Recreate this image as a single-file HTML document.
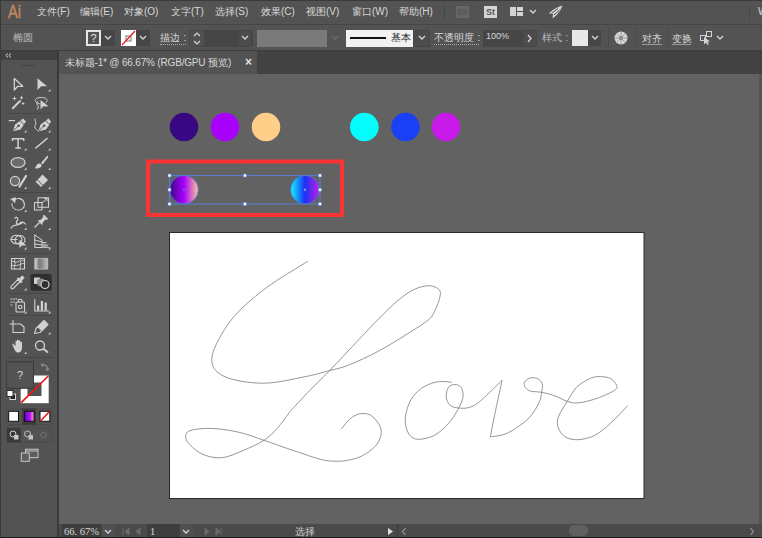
<!DOCTYPE html>
<html><head><meta charset="utf-8">
<style>
*{margin:0;padding:0;box-sizing:border-box}
html,body{width:762px;height:538px;overflow:hidden;background:#535353;font-family:"Liberation Sans",sans-serif;color:#d4d4d4}
.a{position:absolute}
.c{display:inline-block;width:1em;text-align:center}
.t{position:absolute;font-size:10px;line-height:12px;white-space:nowrap;color:#d8d8d8}
</style></head><body>
<!-- window border -->
<div class="a" style="left:0;top:0;width:762px;height:538px;background:#535353"></div>
<div class="a" style="left:0;top:0;width:762px;height:1px;background:#3a3a3a"></div>
<div class="a" style="left:0;top:0;width:1px;height:538px;background:#3a3a3a"></div>
<!-- menu bar -->
<div class="a" style="left:1px;top:24px;width:761px;height:1px;background:#454545"></div>
<div class="t" style="left:8px;top:2px;font-size:17.5px;line-height:20px;color:#c98a5a;transform:scaleX(0.84);transform-origin:0 0;-webkit-text-stroke:0.35px #c98a5a">Ai</div>
<div class="t" style="left:37px;top:6px"><span class="c">文</span><span class="c">件</span>(F)</div>
<div class="t" style="left:80px;top:6px"><span class="c">编</span><span class="c">辑</span>(E)</div>
<div class="t" style="left:124px;top:6px"><span class="c">对</span><span class="c">象</span>(O)</div>
<div class="t" style="left:171px;top:6px"><span class="c">文</span><span class="c">字</span>(T)</div>
<div class="t" style="left:215px;top:6px"><span class="c">选</span><span class="c">择</span>(S)</div>
<div class="t" style="left:261px;top:6px"><span class="c">效</span><span class="c">果</span>(C)</div>
<div class="t" style="left:306px;top:6px"><span class="c">视</span><span class="c">图</span>(V)</div>
<div class="t" style="left:352px;top:6px"><span class="c">窗</span><span class="c">口</span>(W)</div>
<div class="t" style="left:399px;top:6px"><span class="c">帮</span><span class="c">助</span>(H)</div>
<div class="a" style="left:444px;top:5px;width:1px;height:15px;background:#484848"></div>
<div class="a" style="left:456px;top:6px;width:13px;height:12px;background:#666666;color:#555555;font-size:9px;font-weight:bold;line-height:12px;text-align:center">Br</div>
<div class="a" style="left:484px;top:6px;width:13px;height:12px;background:#d4d4d4;color:#555555;font-size:9px;font-weight:bold;line-height:12px;text-align:center">St</div>
<div class="a" style="left:510px;top:7px;width:6px;height:9px;background:#d4d4d4"></div>
<div class="a" style="left:517px;top:7px;width:6px;height:4px;background:#d4d4d4"></div>
<div class="a" style="left:517px;top:12px;width:6px;height:4px;background:#d4d4d4"></div>
<svg class="a" style="left:529px;top:9px" width="8" height="6"><path d="M1,1 L4,4 L7,1" stroke="#d8d8d8" stroke-width="1.3" fill="none"/></svg>
<svg class="a" style="left:548px;top:5px" width="15" height="14"><path d="M14.5,0.5 C9,2 3.5,5.5 1,8.5 L5,9 L4.5,13.5 C9,10.5 12.5,6 14.5,0.5 Z" fill="#d4d4d4"/><path d="M3.5,8.5 L10,3.5 M6,10 L11.5,5" stroke="#535353" stroke-width="1"/></svg>
<div class="a" style="left:749px;top:5px;width:1px;height:15px;background:#484848"></div>
<div class="t" style="left:758px;top:6px">W</div>
<!-- control bar -->
<div class="a" style="left:1px;top:25px;width:761px;height:26px;background:#535353"></div>
<div class="a" style="left:1px;top:50px;width:761px;height:1px;background:#3c3c3c"></div>
<div class="a" style="left:6px;top:29px;width:1px;height:18px;border-left:1px dotted #444"></div>
<div class="t" style="left:13px;top:32px;font-size:10px;color:#bababa"><span class="c">椭</span><span class="c">圆</span></div>
<div class="a" style="left:82px;top:28px;width:1px;height:20px;background:#4a4a4a"></div>
<!-- fill ? -->
<div class="a" style="left:86px;top:30px;width:15px;height:16px;border:2px solid #e6e6e6;background:#535353;font-size:11px;line-height:12px;text-align:center;color:#e0e0e0">?</div>
<div class="a" style="left:101px;top:30px;width:14px;height:16px;background:#464646"></div>
<svg class="a" style="left:104px;top:35px" width="8" height="6"><path d="M1,1 L4,4 L7,1" stroke="#d8d8d8" stroke-width="1.3" fill="none"/></svg>
<!-- stroke none -->
<div class="a" style="left:121px;top:30px;width:15px;height:16px;background:#ffffff"></div>
<svg class="a" style="left:121px;top:30px" width="15" height="16"><rect x="5" y="6" width="5" height="5" fill="none" stroke="#666" stroke-width="0.9"/><path d="M1,15 L14,1" stroke="#ee1c1c" stroke-width="1.3"/></svg>
<div class="a" style="left:136px;top:30px;width:14px;height:16px;background:#464646"></div>
<svg class="a" style="left:139px;top:35px" width="8" height="6"><path d="M1,1 L4,4 L7,1" stroke="#d8d8d8" stroke-width="1.3" fill="none"/></svg>
<div class="t" style="left:160px;top:32px;font-size:10px"><span class="c">描</span><span class="c">边</span><span class="c">:</span></div>
<div class="a" style="left:160px;top:44px;width:26px;height:1px;border-top:1px dotted #aaa"></div>
<div class="a" style="left:189px;top:30px;width:64px;height:17px;border:1px solid #474747;border-radius:2px"></div>
<div class="a" style="left:190px;top:31px;width:14px;height:15px;background:#505050"></div>
<svg class="a" style="left:193px;top:31px" width="8" height="15"><path d="M1,5 L4,2 L7,5 M1,10 L4,13 L7,10" stroke="#d8d8d8" stroke-width="1.2" fill="none"/></svg>
<div class="a" style="left:204px;top:30px;width:34px;height:17px;background:#464646"></div>
<div class="a" style="left:238px;top:30px;width:14px;height:17px;background:#4c4c4c;border:1px solid #464646"></div>
<svg class="a" style="left:241px;top:35px" width="8" height="6"><path d="M1,1 L4,4 L7,1" stroke="#d8d8d8" stroke-width="1.3" fill="none"/></svg>
<div class="a" style="left:257px;top:30px;width:70px;height:17px;background:#7a7a7a"></div>
<svg class="a" style="left:331px;top:35px" width="8" height="6"><path d="M1,1 L4,4 L7,1" stroke="#6c6c6c" stroke-width="1.3" fill="none"/></svg>
<div class="a" style="left:346px;top:30px;width:67px;height:17px;background:#f2f2f2"></div>
<div class="a" style="left:350px;top:37px;width:36px;height:2px;background:#111"></div>
<div class="t" style="left:391px;top:32px;font-size:10px;line-height:12px;color:#222"><span class="c">基</span><span class="c">本</span></div>
<div class="a" style="left:413px;top:30px;width:17px;height:17px;background:#4c4c4c;border:1px solid #464646"></div>
<svg class="a" style="left:418px;top:35px" width="8" height="6"><path d="M1,1 L4,4 L7,1" stroke="#d8d8d8" stroke-width="1.3" fill="none"/></svg>
<div class="t" style="left:434px;top:32px;font-size:10px"><span class="c">不</span><span class="c">透</span><span class="c">明</span><span class="c">度</span><span class="c">:</span></div>
<div class="a" style="left:434px;top:44px;width:45px;height:1px;border-top:1px dotted #aaa"></div>
<div class="a" style="left:483px;top:30px;width:39px;height:17px;background:#464646"></div>
<div class="t" style="left:486px;top:31px;font-size:9px;line-height:11px">100%</div>
<div class="a" style="left:522px;top:30px;width:15px;height:17px;background:#4c4c4c;border:1px solid #464646"></div>
<svg class="a" style="left:527px;top:34px" width="6" height="9"><path d="M1,1 L4,4.5 L1,8" stroke="#d8d8d8" stroke-width="1.3" fill="none"/></svg>
<div class="t" style="left:542px;top:32px;font-size:10px;color:#bdbdbd"><span class="c">样</span><span class="c">式</span><span class="c">:</span></div>
<div class="a" style="left:572px;top:30px;width:16px;height:16px;background:#e8e8e8"></div>
<div class="a" style="left:588px;top:30px;width:13px;height:16px;background:#464646"></div>
<svg class="a" style="left:591px;top:35px" width="8" height="6"><path d="M1,1 L4,4 L7,1" stroke="#d8d8d8" stroke-width="1.3" fill="none"/></svg>
<div class="a" style="left:608px;top:28px;width:1px;height:20px;background:#4a4a4a"></div>
<svg class="a" style="left:614px;top:31px" width="14" height="14"><circle cx="7" cy="7" r="6.5" fill="#d8d8d8"/><circle cx="7" cy="7" r="2" fill="#8a8a8a"/><path d="M7,1 V13 M1,7 H13 M2.8,2.8 L11.2,11.2 M11.2,2.8 L2.8,11.2" stroke="#8a8a8a" stroke-width="0.8"/></svg>
<div class="a" style="left:636px;top:28px;width:1px;height:20px;background:#4a4a4a"></div>
<div class="t" style="left:642px;top:33px;font-size:10px"><span class="c">对</span><span class="c">齐</span></div>
<div class="a" style="left:642px;top:44px;width:20px;height:1px;background:#9a9a9a"></div>
<div class="a" style="left:667px;top:28px;width:1px;height:20px;background:#4a4a4a"></div>
<div class="t" style="left:672px;top:33px;font-size:10px"><span class="c">变</span><span class="c">换</span></div>
<div class="a" style="left:672px;top:44px;width:19px;height:1px;background:#9a9a9a"></div>
<svg class="a" style="left:699px;top:30px" width="15" height="15"><rect x="1.5" y="5.5" width="5" height="5" fill="none" stroke="#d4d4d4"/><rect x="7.5" y="1.5" width="5" height="5" fill="none" stroke="#d4d4d4"/><path d="M5,7 L5,14.5 L7,12.5 L8.5,15 L9.8,14.3 L8.5,11.8 L11,11.5 Z" fill="#d4d4d4"/></svg>
<svg class="a" style="left:716px;top:35px" width="8" height="6"><path d="M1,1 L4,4 L7,1" stroke="#d8d8d8" stroke-width="1.3" fill="none"/></svg>

<!-- tab bar -->
<div class="a" style="left:59px;top:51px;width:703px;height:23px;background:#424242"></div>
<div class="a" style="left:59px;top:51px;width:198px;height:23px;background:#535353"></div>
<div class="t" style="left:64.5px;top:57px;font-size:10px;letter-spacing:-0.18px"><span class="c">未</span><span class="c">标</span><span class="c">题</span>-1* @ 66.67% (RGB/GPU <span class="c">预</span><span class="c">览</span>)</div>
<div class="t" style="left:245px;top:56px;font-size:12px;font-weight:bold;color:#e0e0e0">×</div>

<!-- tools panel -->
<div class="a" style="left:1px;top:51px;width:57px;height:473px;background:#535353"></div>
<div class="a" style="left:1px;top:51px;width:57px;height:9px;background:#424242"></div>
<svg class="a" style="left:5px;top:53px" width="7" height="5"><path d="M3,0.5 L0.8,2.5 L3,4.5 M6,0.5 L3.8,2.5 L6,4.5" stroke="#cfcfcf" stroke-width="1" fill="none"/></svg>
<svg class="a" style="left:20px;top:64px" width="17" height="3"><path d="M1,1.5 H16" stroke="#404040" stroke-width="1.5" stroke-dasharray="1.2 1.2"/></svg>
<div class="a" style="left:57px;top:51px;width:2px;height:487px;background:#3a3a3a"></div>

<svg class="a" style="left:0;top:0" width="60" height="538">
<g stroke="#474747" stroke-width="1"><path d="M6.5,113.5 H52.5 M6.5,192.5 H52.5 M6.5,253.5 H52.5 M6.5,293.5 H52.5 M6.5,315.5 H52.5 M6.5,357.5 H52.5"/></g>
<g fill="#cdcdcd">
<path d="M26.5,130 V132.5 H24 Z M50.5,130 V132.5 H48 Z M26.5,148 V150.5 H24 Z M50.5,148 V150.5 H48 Z M26.5,167.5 V170 H24 Z M50.5,167.5 V170 H48 Z M26.5,186.5 V189 H24 Z M50.5,186.5 V189 H48 Z M26.5,209.5 V212 H24 Z M50.5,209.5 V212 H48 Z M26.5,227.5 V230 H24 Z M50.5,227.5 V230 H48 Z M26.5,247 V249.5 H24 Z M50.5,247 V249.5 H48 Z M26.5,288 V290.5 H24 Z M26.5,311 V313.5 H24 Z M50.5,311 V313.5 H48 Z M50.5,332 V334.5 H48 Z M26.5,351.5 V354 H24 Z M50.5,89 V91.5 H48 Z"/>
</g>
<g fill="none" stroke="#d2d2d2" stroke-width="1.3" stroke-linejoin="round" stroke-linecap="round">
<!-- direct selection hollow -->
<path d="M14.3,78.5 V90 L17.8,86.3 L22.8,86.3 Z"/>
<!-- magic wand -->
<path d="M12.8,108.2 L20,101" stroke-width="2"/>
<path d="M14.5,97 V100 M13,98.5 H16 M21.5,96.5 V99 M20.3,97.8 H22.7 M23,102.5 V104.5 M22,103.5 H24" stroke-width="0.9"/>
<!-- lasso -->
<path d="M40,104 C34,103 33,98 40,97.5 C46,97 49,100 46,102.5 M38,101 C36,103 37,106 39,107 C37,108 36,109 38,109" stroke-width="1"/>
<!-- T -->
<path d="M12.5,141 V138.8 H23.7 V141 M18.1,138.8 V148 M15.3,148 H20.9" stroke-width="1.5" stroke-linecap="butt"/>
<!-- line -->
<path d="M35.8,148 L47,138.5" stroke-width="1.6"/>
<!-- ellipse -->
<ellipse cx="18" cy="162.5" rx="7" ry="4.9" fill="#6c6c6c" stroke-width="1.2"/>
<!-- shaper -->
<circle cx="15" cy="181" r="4.6" fill="#6c6c6c" stroke-width="1.2"/>
<path d="M19.5,186.5 L26,176" stroke-width="2.2"/>
<!-- rotate -->
<path d="M14.5,200 C17.5,197.5 22.5,198 24,202.5 C24.8,205 24,207.5 22.5,208.5" stroke-width="1.2"/><path d="M21.5,209.3 C19,210.5 15.5,210.2 13.5,208 C12.3,206.5 11.8,205 12,203.5" stroke-width="1.1" stroke-dasharray="1.3 1.3"/><path d="M11,199 L15.5,197.5 L15,202.5 Z" fill="#d2d2d2" stroke-width="0.6"/>
<!-- scale -->
<rect x="34.5" y="202.5" width="7.5" height="7.5" stroke-width="1.1"/>
<rect x="38" y="197.8" width="10.5" height="9.5" stroke-width="1.1"/>
<path d="M42,203 L47,198.5 M44.5,198.5 H47 V201" stroke-width="1"/>
<!-- warp -->
<path d="M11,228 C13,224 17,226 19,224 C21,221 24,222 25.5,224 M15,218 C17,216 19,219 17,221 C15,223 18,226 22,223" stroke-width="1.2"/>
<!-- shape builder -->
<ellipse cx="16.5" cy="239.5" rx="5.5" ry="4.2" stroke-width="1.1"/>
<ellipse cx="20" cy="240" rx="5" ry="4.5" stroke-width="1.1"/>
<path d="M11,239.5 H17" stroke-width="1"/>
<!-- perspective -->
<path d="M34.8,235 V247.5 H49 M34.8,235 L42,240 V247.5 M34.8,240 L42,242 M34.8,244 L42,245 M42,242.5 H46 M42,245 H48" stroke-width="1"/>
<!-- mesh -->
<rect x="11.5" y="258.5" width="13" height="10.5" stroke-width="1.1"/>
<path d="M11.5,261.5 C14,260.5 15,263 17.5,262 C20,261 21,259.5 21.5,258.5 M11.5,265.5 C14,265 16,266.5 18.5,265 C21,263.5 22.5,264 24.5,263 M15,258.5 C13.5,261 16,263.5 14.5,266 C13.5,267.5 14.5,268.5 15,269 M20,269 C19.5,267 21.5,265 20.5,263 C19.5,261 22,260 24.5,260.5" stroke-width="0.9"/>
<!-- eyedropper -->
<path d="M11.3,288.5 C10.5,287.5 10.8,286.5 11.5,285.8 L18,279.3 L20.2,281.5 L13.7,288 C13,288.7 12,289 11.3,288.5 Z" stroke-width="1.1"/>
<path d="M17.3,278.8 L18.3,277.8 L22.2,281.7 L21.2,282.7 Z M19.5,278.5 L21.5,276.5 C22.5,275.5 24.5,277 23.7,278.5 L21.5,280.5 Z" fill="#d2d2d2" stroke-width="0.9"/>
<!-- symbol sprayer -->
<path d="M11,299 H12 M13.5,299 H14.5 M16,299 H17 M11,302 H12 M13.5,302 H14.5 M11,305 H12" stroke-width="1.2"/>
<rect x="16" y="302" width="8.5" height="10" rx="1" stroke-width="1.1"/>
<circle cx="20.2" cy="307" r="1.8" stroke-width="1.1"/>
<path d="M18.5,302 V299.5 H22 V302" stroke-width="1"/>
<!-- graph -->
<path d="M34.8,299.5 V311 H48.5" stroke-width="1.1"/><path d="M37,305.5 h2.2 v5 h-2.2 Z M40.8,301 h2.2 v9.5 h-2.2 Z M44.6,302.5 h2.2 v8 h-2.2 Z" fill="#d2d2d2" stroke="none"/>
<path d="M38.5,131 C35,129 34,127 35.5,124.5 C37,122 34,120.5 35,119" stroke-width="1"/>
<!-- artboard -->
<path d="M13,320.5 V332.5 H24 V327 L20.5,324 H10" stroke-width="1.1"/>
<!-- pencil -->
<path d="M34.5,333.5 L36,328.5 L44,320.5 L48,324.5 L40,332.5 Z" stroke-width="1.1"/><path d="M37.5,327 L44,320.5 L48,324.5 L41.5,331 Z" fill="#d2d2d2" stroke="none"/>
<!-- zoom -->
<circle cx="40" cy="345.5" r="4.5" stroke-width="1.3"/>
<path d="M43.3,348.8 L47.5,352" stroke-width="1.8"/>
</g>
<g fill="#d2d2d2">
<!-- selection filled -->
<path d="M37.5,78.3 V90 L41.3,86.2 L47,86.2 Z"/>
<!-- lasso arrow -->
<path d="M40.5,100 V109.5 L43,106.5 L48.5,106.3 Z"/>
<!-- pens -->
<path d="M8.7,120 H15 V121.2 H8.7 Z"/>
<path d="M13,131.3 L15,124.5 L20,121 L23.8,124.8 L20.5,129.5 Z"/>
<path d="M20.5,120.5 L23,118.5 L26,121.5 L24,124 Z"/>

<path d="M38.5,131.3 L40.5,124.5 L45.5,121 L49.3,124.8 L46,129.5 Z"/>
<path d="M46,120.5 L48.5,118.5 L51,121.5 L49.5,124 Z"/>
</g><g stroke="#535353" stroke-width="0.9" fill="#535353"><path d="M13.6,130.6 L18,126.3 M39.1,130.6 L43.5,126.3"/><circle cx="18.6" cy="125.7" r="0.9"/><circle cx="44.1" cy="125.7" r="0.9"/></g><g fill="#d2d2d2">
<!-- brush -->
<path d="M41,163 L47,156 C48,155.5 48.5,156.5 48,157.5 L42.5,164.5 Z"/>
<path d="M35,168.5 C36,166 37,163.5 39.5,163.5 C41.5,164 42,165.5 41,167 C39.5,168.5 37,168.5 35,168.5 Z"/>
<!-- eraser -->
<path d="M35.5,182 L42.5,174.5 L48,180 L41,187 Z"/>
<!-- pin -->
<path d="M37.5,220.5 L40.5,220 L43.5,217 L42.5,216 L44,214.8 L48,218.8 L46.8,220.2 L45.8,219.3 L42.8,222.3 L42.3,225.3 Z"/><path d="M34.5,227.5 L39.5,222.5" stroke="#d2d2d2" stroke-width="1.3" fill="none"/>
<!-- hand -->
<path d="M13,346 C12,344 12.5,343 13.5,344 L15.5,346 V341.5 C15.5,340.5 17,340.5 17,341.5 V345 V340.5 C17,339.5 18.7,339.5 18.7,340.5 V345 V341 C18.7,340 20.3,340 20.3,341 V345.5 V342.5 C20.3,341.5 22,341.5 22,342.5 V348 C22,351 20,352.5 18,352.5 C16,352.5 15,351 13,346 Z"/>
</g>
<!-- shape builder arrow -->
<path d="M19.5,239.5 V248 L22,245.5 L26.5,245.5 Z" fill="#d2d2d2"/>
<!-- perspective fill -->
<path d="M42,242 L49,247.5 H42 Z" fill="#a0a0a0"/>
<!-- eraser stripe -->
<path d="M35.5,182 L38.5,185 L41,187 L38,184 Z" fill="#535353"/>
<path d="M37.5,180 L43,185.5" stroke="#535353" stroke-width="1"/>
<!-- gradient tool -->
<defs><linearGradient id="gt" x1="0" x2="1"><stop offset="0" stop-color="#d8d8d8"/><stop offset="0.35" stop-color="#777"/><stop offset="1" stop-color="#c0c0c0"/></linearGradient></defs>
<rect x="34.8" y="258.3" width="13" height="10.8" fill="url(#gt)" stroke="#bdbdbd" stroke-width="0.8"/>
<!-- blend highlighted -->
<rect x="30.5" y="274" width="21.2" height="16.7" rx="2" fill="#2f2f2f"/>
<rect x="34" y="277.5" width="6" height="6.5" fill="#cfcfcf"/>
<circle cx="41" cy="282.5" r="4" fill="#8a8a8a"/>
<circle cx="45" cy="284.5" r="4" fill="#2f2f2f" stroke="#d2d2d2" stroke-width="1.2"/>
</svg>
<svg class="a" style="left:0;top:0" width="60" height="538">
<!-- stroke box -->
<rect x="20.7" y="375.5" width="28" height="27.7" fill="#ffffff"/>
<rect x="27.5" y="382.5" width="14" height="13.5" fill="#535353"/>
<path d="M21.2,402.7 L48.3,376" stroke="#f21414" stroke-width="1.7"/>
<!-- fill box -->
<rect x="6.5" y="361.8" width="27" height="26.5" fill="#535353" stroke="#3a3a3a" stroke-width="1"/>
<text x="20" y="379" font-family="Liberation Sans" font-size="11" fill="#d8d8d8" text-anchor="middle">?</text>
<!-- swap -->
<path d="M42.5,365 C45.5,364.5 47.5,366 47.5,369" fill="none" stroke="#8c8c8c" stroke-width="1.2"/><path d="M40.3,365 L43.3,362.8 L43.3,367.2 Z M45.3,368.5 L49.7,368.5 L47.5,371.5 Z" fill="#8c8c8c"/>
<!-- default -->
<rect x="10" y="394" width="5.5" height="5.5" fill="#222" stroke="#d8d8d8" stroke-width="1"/>
<rect x="7" y="390.5" width="6" height="6" fill="#ffffff" stroke="#2a2a2a" stroke-width="1"/>
<!-- color mode row -->
<rect x="6.6" y="408.5" width="45.5" height="16.2" rx="2" fill="none" stroke="#4c4c4c" stroke-width="1"/>
<rect x="22.2" y="408.5" width="13.9" height="16.2" fill="#3b3b3b"/>
<rect x="8.7" y="411.3" width="9.8" height="10" fill="#ffffff" stroke="#111" stroke-width="1"/>
<defs><linearGradient id="cm" x1="0" x2="1"><stop offset="0" stop-color="#6a00d8"/><stop offset="0.55" stop-color="#b010f0"/><stop offset="1" stop-color="#ffb0e0"/></linearGradient></defs>
<rect x="24.5" y="411.3" width="9.5" height="10" fill="url(#cm)" stroke="#111" stroke-width="1"/>
<rect x="40" y="411.3" width="9.8" height="10" fill="#ffffff" stroke="#111" stroke-width="1"/>
<path d="M40.5,421 L49.5,411.5" stroke="#ee1111" stroke-width="1.5"/>
<!-- draw mode row -->
<rect x="6.8" y="428" width="44.8" height="14.3" rx="1" fill="none" stroke="#4c4c4c" stroke-width="1"/>
<rect x="7" y="428.2" width="13.8" height="14" fill="#3a3a3a"/>
<circle cx="13" cy="434" r="3" fill="none" stroke="#d2d2d2" stroke-width="1"/>
<rect x="14" y="435" width="4.5" height="4.5" fill="#c8c8c8"/>
<circle cx="27.5" cy="434" r="3" fill="none" stroke="#c0c0c0" stroke-width="1"/>
<rect x="28.5" y="435" width="4.5" height="4.5" fill="#c0c0c0"/>
<circle cx="43.5" cy="435" r="2.7" fill="none" stroke="#7a7a7a" stroke-width="0.8"/>
<!-- screen mode -->
<rect x="25.5" y="449.2" width="12.5" height="8.5" fill="#5e5e5e" stroke="#c8c8c8" stroke-width="1"/>
<rect x="21.3" y="453" width="8" height="8.3" fill="#5e5e5e" stroke="#c8c8c8" stroke-width="1"/>
<path d="M25.5,451 H38" stroke="#c8c8c8" stroke-width="1"/>
</svg>

<!-- canvas -->
<div class="a" style="left:59px;top:74px;width:700px;height:450px;background:#626262"></div>
<div class="a" style="left:759px;top:74px;width:3px;height:450px;background:#555555"></div>

<!-- circles -->
<svg class="a" style="left:0;top:0" width="762" height="538">
<circle cx="184" cy="127" r="14.3" fill="#380882"/>
<circle cx="225" cy="127" r="14.3" fill="#a802fd"/>
<circle cx="266" cy="127" r="14.3" fill="#ffcf8a"/>
<circle cx="364.3" cy="127" r="14.3" fill="#04fcfc"/>
<circle cx="405.5" cy="127" r="14.3" fill="#1a40f6"/>
<circle cx="446" cy="127" r="14.3" fill="#c81ae8"/>
<defs>
<linearGradient id="g1" x1="0" x2="1" y1="0" y2="0"><stop offset="0" stop-color="#3a0a80"/><stop offset="0.5" stop-color="#a800ff"/><stop offset="1" stop-color="#ffc890"/></linearGradient>
<linearGradient id="g2" x1="0" x2="1" y1="0" y2="0"><stop offset="0" stop-color="#10f8ff"/><stop offset="0.5" stop-color="#1a30f5"/><stop offset="1" stop-color="#c81ee8"/></linearGradient>
</defs>
<circle cx="184" cy="189.7" r="14.3" fill="url(#g1)"/>
<circle cx="305" cy="189.7" r="14.3" fill="url(#g2)"/>
<rect x="148" y="161.5" width="194" height="53.5" fill="none" stroke="#fc3434" stroke-width="4"/>
<rect x="169.5" y="175.5" width="150.5" height="28.5" fill="none" stroke="#5b7cd0" stroke-width="1"/>
<circle cx="184" cy="189.7" r="14.3" fill="none" stroke="#4a78d8" stroke-width="0.8"/>
<circle cx="305" cy="189.7" r="14.3" fill="none" stroke="#4a78d8" stroke-width="0.8"/>
<g fill="#ffffff" stroke="#5a86e0" stroke-width="0.6" transform="translate(0.5,0.5)">
<rect x="167.5" y="173.5" width="3" height="3"/><rect x="242.8" y="173.5" width="3" height="3"/><rect x="318" y="173.5" width="3" height="3"/>
<rect x="167.5" y="187.7" width="3" height="3"/><rect x="318" y="187.7" width="3" height="3"/>
<rect x="167.5" y="202" width="3" height="3"/><rect x="242.8" y="202" width="3" height="3"/><rect x="318" y="202" width="3" height="3"/>
</g>
<rect x="183" y="188.7" width="2" height="2" fill="#4a78d8"/>
<rect x="304" y="188.7" width="2" height="2" fill="#8aa0e0"/>
<!-- artboard -->
<rect x="169.5" y="232.5" width="474.5" height="266" fill="#ffffff" stroke="#2a2a2a" stroke-width="1"/>
<path d="M307.7,261.3 C300.6,265.9 277.8,279.0 265.0,288.8 C252.2,298.6 240.0,308.6 231.2,320.0 C222.4,331.4 213.3,347.6 212.0,356.9 C210.7,366.2 215.0,371.6 223.4,376.0 C231.8,380.4 249.3,383.1 262.7,383.2 C276.1,383.3 292.9,379.0 304.0,376.9 C315.1,374.8 322.1,372.6 329.6,370.6 C337.2,368.6 341.1,368.1 349.3,364.8 C357.5,361.6 368.9,356.3 378.6,351.1 C388.4,345.9 399.5,338.8 407.8,333.6 C416.1,328.4 423.7,323.8 428.3,319.9 C432.9,316.0 433.2,313.9 435.2,310.0 C437.1,306.1 439.4,299.9 440.0,296.5 C440.6,293.1 440.8,291.4 439.0,289.6 C437.2,287.8 433.5,285.7 429.3,285.7 C425.1,285.7 418.9,287.2 413.7,289.6 C408.5,292.1 403.9,295.5 398.0,300.4 C392.1,305.3 385.1,312.4 378.6,318.9 C372.1,325.4 367.2,330.8 359.0,339.4 C350.8,348.0 337.9,362.1 329.6,370.6 C321.4,379.2 316.1,383.9 309.5,390.7 C302.9,397.5 293.4,407.9 290.2,411.3 C288.0,414.2 281.4,423.7 277.0,428.5 C272.6,433.3 269.7,436.6 264.0,440.3 C258.3,444.0 250.1,447.6 243.0,450.5 C235.9,453.4 228.3,457.3 221.3,457.8 C214.3,458.3 206.7,456.3 201.0,453.5 C195.3,450.7 189.2,444.6 187.0,441.0 C184.8,437.4 185.3,434.0 187.5,432.0 C189.7,430.0 195.1,429.3 200.0,428.8 C204.9,428.3 210.3,428.2 217.0,428.8 C223.7,429.4 232.2,430.6 240.0,432.5 C247.8,434.4 254.7,437.2 264.0,440.3 C273.3,443.4 284.9,447.9 295.7,451.3 C306.5,454.7 318.7,459.8 328.8,460.9 C338.9,462.0 348.6,460.7 356.4,458.2 C364.2,455.7 371.5,450.4 375.6,445.8 C379.7,441.2 381.6,435.4 381.2,430.6 C380.8,425.8 376.1,419.7 372.9,416.8 C369.7,413.9 365.6,413.3 361.9,413.5 C358.2,413.7 354.2,415.6 350.8,418.2 C347.4,420.8 342.8,427.4 341.2,429.2" fill="none" stroke="#8a8a8a" stroke-width="0.9"/>
<path d="M451.7,382.3 C450.1,382.2 445.6,381.3 442.2,381.5 C438.8,381.7 435.1,381.9 431.2,383.4 C427.3,384.9 422.3,387.2 418.6,390.5 C414.9,393.8 411.4,398.1 409.2,403.1 C407.0,408.1 405.2,415.1 405.2,420.4 C405.2,425.6 407.0,431.5 409.2,434.6 C411.4,437.8 414.4,439.2 418.6,439.3 C422.8,439.4 429.4,438.0 434.4,435.4 C439.4,432.8 444.6,427.8 448.5,423.5 C452.4,419.2 455.6,413.8 458.0,409.4 C460.4,404.9 462.5,400.5 463.0,396.8 C463.5,393.1 462.5,389.4 461.1,387.3 C459.7,385.2 456.9,384.5 454.8,384.5 C452.7,384.5 449.9,385.2 448.5,387.3 C447.1,389.4 445.9,393.8 446.2,396.8 C446.5,399.8 447.9,403.5 450.1,405.4 C452.3,407.3 456.2,407.8 459.6,408.1 C463.0,408.4 466.9,408.4 470.6,407.0 C474.3,405.6 476.4,404.4 481.6,399.9 C486.9,395.4 498.7,383.5 502.1,380.2 C501.1,385.1 497.8,399.9 495.8,409.4 C493.8,418.8 491.2,432.3 490.3,436.9 C492.8,436.4 500.3,435.9 505.0,434.1 C509.7,432.4 514.3,429.4 518.6,426.4 C522.9,423.4 527.2,420.2 530.6,416.2 C534.0,412.2 537.2,406.5 539.1,402.5 C541.0,398.5 541.2,395.4 541.7,392.3 C542.2,389.2 542.9,386.1 542.2,383.8 C541.5,381.5 539.6,379.5 537.4,378.6 C535.2,377.7 531.1,377.4 528.9,378.3 C526.7,379.2 524.1,381.8 524.1,383.8 C524.1,385.9 526.0,389.2 528.9,390.6 C531.8,392.0 537.4,391.5 541.7,392.3 C546.0,393.1 550.2,394.2 554.5,395.7 C558.8,397.2 563.3,400.1 567.3,401.3 C571.3,402.5 573.4,403.4 578.4,402.9 C583.4,402.4 591.1,400.4 597.1,398.3 C603.1,396.2 610.9,392.7 614.2,390.6 C617.5,388.5 617.3,387.5 616.7,385.5 C616.1,383.5 613.5,380.1 610.8,378.6 C608.1,377.1 603.9,376.7 600.5,376.6 C597.1,376.6 594.3,376.5 590.3,378.3 C586.3,380.1 580.4,383.4 576.6,387.2 C572.8,391.0 570.3,396.5 567.3,401.3 C564.3,406.1 560.3,412.0 558.7,416.2 C557.1,420.4 556.9,423.0 557.9,426.4 C558.9,429.8 561.3,434.4 564.7,436.6 C568.1,438.8 573.3,440.0 578.4,439.7 C583.5,439.4 590.0,437.8 595.4,435.0 C600.8,432.2 605.4,427.9 610.8,423.0 C616.2,418.1 625.0,408.5 627.8,405.6" fill="none" stroke="#8a8a8a" stroke-width="0.9"/>
</svg>

<!-- status bar -->
<div class="a" style="left:59px;top:524px;width:703px;height:13px;background:#4a4a4a"></div>
<div class="a" style="left:0;top:537px;width:762px;height:1px;background:#1e1e1e"></div>
<div class="a" style="left:62px;top:524px;width:39px;height:13px;background:#3e3e3e"></div>
<div class="t" style="left:64px;top:525px;font-size:10.5px;line-height:13px;font-family:'Liberation Serif',serif">66. 67%</div>
<div class="a" style="left:101px;top:524px;width:14px;height:13px;background:#505050;border-left:1px solid #444"></div>
<svg class="a" style="left:104px;top:529px" width="8" height="6"><path d="M1,1 L4,4 L7,1" stroke="#d8d8d8" stroke-width="1.3" fill="none"/></svg>
<svg class="a" style="left:120px;top:526px" width="108" height="11"><path d="M3,2 V9 M85,2 L89,5.5 L85,9 Z M96,2 L100,5.5 L96,9 Z M101,2 V9" stroke="#6a6a6a" stroke-width="1" fill="#6a6a6a"/><path d="M9,2 L5,5.5 L9,9 Z M20,2 L16,5.5 L20,9 Z" fill="#6a6a6a" stroke="#6a6a6a" stroke-width="1"/></svg>
<div class="a" style="left:147px;top:524px;width:32px;height:13px;background:#3e3e3e"></div>
<div class="t" style="left:150px;top:525px;font-size:10.5px;line-height:13px;font-family:'Liberation Serif',serif">1</div>
<div class="a" style="left:179px;top:524px;width:14px;height:13px;background:#505050;border-left:1px solid #444"></div>
<svg class="a" style="left:182px;top:529px" width="8" height="6"><path d="M1,1 L4,4 L7,1" stroke="#d8d8d8" stroke-width="1.3" fill="none"/></svg>
<div class="t" style="left:295px;top:526px;font-size:10px;line-height:12px;color:#cfcfcf"><span class="c">选</span><span class="c">择</span></div>
<svg class="a" style="left:387px;top:527px" width="7" height="9"><path d="M1,1 L6,4.5 L1,8 Z" fill="#e0e0e0"/></svg>
<div class="a" style="left:397px;top:524px;width:1px;height:13px;background:#3a3a3a"></div>
<svg class="a" style="left:401px;top:527px" width="6" height="9"><path d="M4.5,1 L1.5,4.5 L4.5,8" stroke="#a0a0a0" stroke-width="1.1" fill="none"/></svg>
<div class="a" style="left:569px;top:525px;width:19px;height:11px;border-radius:5px;background:#606060"></div>
<svg class="a" style="left:749px;top:527px" width="6" height="9"><path d="M1.5,1 L4.5,4.5 L1.5,8" stroke="#a0a0a0" stroke-width="1.1" fill="none"/></svg>
</body></html>
